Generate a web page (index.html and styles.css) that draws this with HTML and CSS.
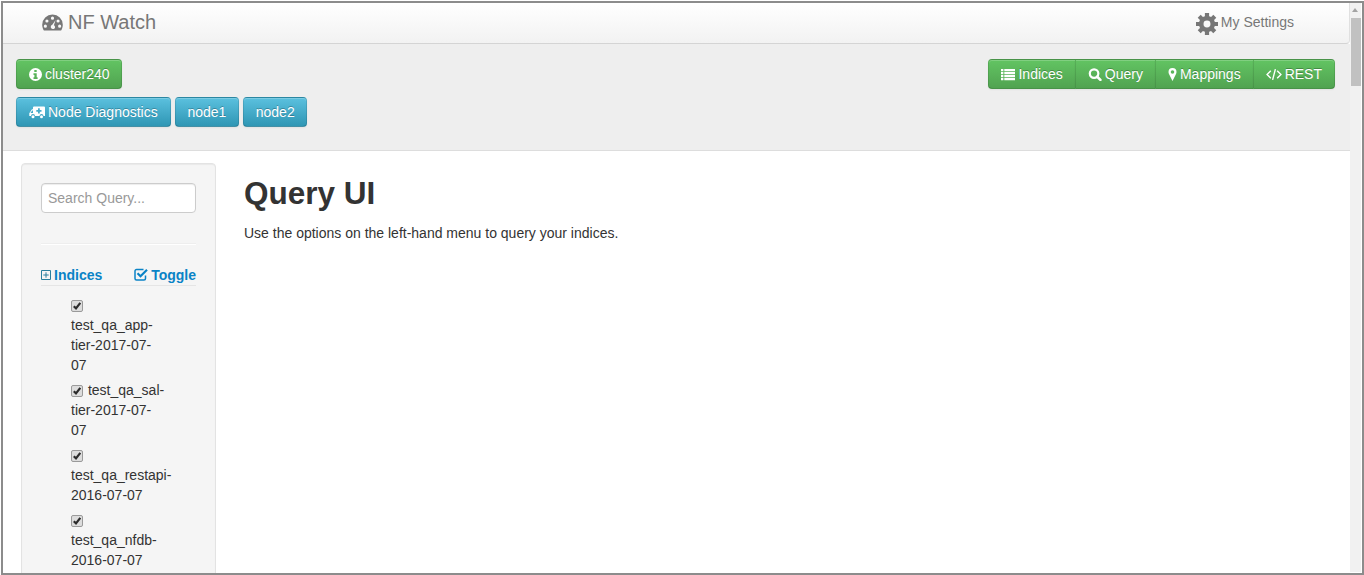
FILE: index.html
```html
<!DOCTYPE html>
<html lang="en">
<head>
<meta charset="utf-8">
<title>NF Watch</title>
<link rel="stylesheet" href="styles.css">
</head>
<body>
<div class="frame">
  <div class="page">
    <header class="navbar">
      <a class="brand">
        <svg class="brand-icon" viewBox="0 0 20 16"><path fill-rule="evenodd" d="M10 .5A9.7 9.7 0 0 0 .2 10.2c0 1.900.5 3.600 1.400 5.100.2.300.5.400.8.400h15.200c.3 0 .6-.1.800-.4.900-1.500 1.400-3.200 1.400-5.100A9.700 9.700 0 0 0 10 .5zM4.700 5.100a1.500 1.500 0 1 1 0 3 1.500 1.500 0 0 1 0-3zM10 2.400a1.500 1.500 0 1 1 0 3 1.500 1.500 0 0 1 0-3zM15.300 5.100a1.500 1.500 0 1 1 0 3 1.500 1.500 0 0 1 0-3zM3.200 10a1.500 1.500 0 1 1 0 3 1.500 1.500 0 0 1 0-3zM16.800 10a1.500 1.500 0 1 1 0 3 1.500 1.500 0 0 1 0-3zM13 5.700 11.300 10.500a2 2 0 1 1-2.600 2.800 2 2 0 0 1 1.100-3.100z"/></svg>
        <span>NF Watch</span>
      </a>
      <a class="settings">
        <svg class="gear" viewBox="0 0 24 24"><g stroke="currentColor" fill="none"><circle cx="12" cy="12" r="6.300" stroke-width="5"/><path stroke-width="4.600" d="M12 0v24M0 12h24M3.500 3.500l17 17M20.500 3.500l-17 17" stroke-dasharray="5 14 5"/></g></svg>
        <span>My Settings</span>
      </a>
    </header>
    <section class="toolbar">
      <div class="toolbar-left">
        <div class="btn-row">
          <a class="btn btn-green btn-cluster">
            <svg class="ico ico-info" viewBox="0.500 0.500 13 13"><path fill-rule="evenodd" d="M7 .5a6.500 6.500 0 1 0 0 13A6.500 6.500 0 0 0 7 .5zM5.800 2.500h2.400v2H5.800zM5 5.800h3.200v3.900h.9v1.700H5V9.700h.9V7.500H5z"/></svg>
            cluster240
          </a>
        </div>
        <div class="btn-row">
          <a class="btn btn-blue">
            <svg class="ico ico-amb" viewBox="0 0 16 13"><path fill-rule="evenodd" d="M5 .5h10a1 1 0 0 1 1 1V10h-1.500a2 2 0 0 0-4 0h-4.500a2 2 0 0 0-4 0H.3V7.200L3 3.200h1V1.500a1 1 0 0 1 1-1zM9 2.200v1.700H7.300v1.800H9v1.700h1.800V5.700h1.700V3.900h-1.700V2.200zM3.200 4.500 1.500 7h2.500V4.500z"/><circle cx="4" cy="10.800" r="1.500"/><circle cx="12.500" cy="10.800" r="1.500"/></svg>
            Node Diagnostics
          </a>
          <a class="btn btn-blue btn-node">node1</a>
          <a class="btn btn-blue btn-node">node2</a>
        </div>
      </div>
      <div class="btn-group">
        <a class="btn btn-green">
          <svg class="ico ico-list" viewBox="0 0 14 12"><path d="M0 .5h2.400v2.300H0zM3.300.5H14v2.300H3.300zM0 3.500h2.400v2.300H0zM3.300 3.500H14v2.300H3.300zM0 6.500h2.400v2.300H0zM3.300 6.500H14v2.300H3.300zM0 9.500h2.400v2.300H0zM3.300 9.500H14v2.300H3.300z"/></svg>
          Indices
        </a>
        <a class="btn btn-green">
          <svg class="ico ico-search" viewBox="0 0 14 14"><circle cx="6" cy="6" r="4.600" fill="none" stroke="currentColor" stroke-width="2.400"/><path d="M9.400 9.400l3.400 3.400" stroke="currentColor" stroke-width="2.800" stroke-linecap="round"/></svg>
          Query
        </a>
        <a class="btn btn-green">
          <svg class="ico ico-pin" viewBox="0 0 8 13"><path fill-rule="evenodd" d="M4 0a4 4 0 0 0-4 4c0 1 .3 1.600.6 2.200L4 13l3.400-6.800C7.700 5.600 8 5 8 4a4 4 0 0 0-4-4zm0 2.200a1.800 1.800 0 1 1 0 3.600 1.800 1.800 0 0 1 0-3.600z"/></svg>
          Mappings
        </a>
        <a class="btn btn-green">
          <svg class="ico ico-code" viewBox="0 0 15 12"><path d="M4.500 2.500 1 6l3.500 3.500M10.500 2.500 14 6l-3.500 3.500M8.800 1 6.200 11" fill="none" stroke="currentColor" stroke-width="1.300"/></svg>
          REST
        </a>
      </div>
    </section>
    <div class="content">
      <aside class="sidebar">
        <input class="search" type="text" placeholder="Search Query...">
        <hr class="rule">
        <div class="section-head">
          <a class="head-link">
            <svg class="head-ico" viewBox="0 0 10 10"><path d="M.5.5h9v9h-9zM5 2.300v5.400M2.300 5h5.400" fill="none" stroke="#2a7f9e" stroke-width="1"/></svg>
            Indices
          </a>
          <a class="head-link">
            <svg class="head-ico-lg" viewBox="0 0 14 13"><path d="M11.500 7.500v3a1.500 1.500 0 0 1-1.500 1.500H2.500A1.500 1.500 0 0 1 1 10.500V3a1.500 1.500 0 0 1 1.500-1.500h7" fill="none" stroke="currentColor" stroke-width="1.500"/><path d="M3.500 5.300 6.500 8.200 13 1.800" fill="none" stroke="currentColor" stroke-width="2.200"/></svg>
            Toggle
          </a>
        </div>
        <ul class="index-list">
          <li class="index-item"><span class="check"><svg viewBox="0 0 10 10"><path d="M1.800 5.200 4 7.400 8.300 1.800" fill="none" stroke="#2b2b2b" stroke-width="2.200"/></svg></span> test_qa_app-tier-2017-07-07</li>
          <li class="index-item"><span class="check"><svg viewBox="0 0 10 10"><path d="M1.800 5.200 4 7.400 8.300 1.800" fill="none" stroke="#2b2b2b" stroke-width="2.200"/></svg></span> test_qa_sal-tier-2017-07-07</li>
          <li class="index-item"><span class="check"><svg viewBox="0 0 10 10"><path d="M1.800 5.200 4 7.400 8.300 1.800" fill="none" stroke="#2b2b2b" stroke-width="2.200"/></svg></span> test_qa_restapi-2016-07-07</li>
          <li class="index-item"><span class="check"><svg viewBox="0 0 10 10"><path d="M1.800 5.200 4 7.400 8.300 1.800" fill="none" stroke="#2b2b2b" stroke-width="2.200"/></svg></span> test_qa_nfdb-2016-07-07</li>
        </ul>
      </aside>
      <main class="main">
        <h1 class="title">Query UI</h1>
        <p class="lead">Use the options on the left-hand menu to query your indices.</p>
      </main>
    </div>
  </div>
  <div class="scrollbar">
    <div class="scroll-arrow"></div>
    <div class="scroll-thumb"></div>
  </div>
</div>
</body>
</html>
```
FILE: styles.css
```css
* { box-sizing: border-box; }
html, body { margin: 0; height: 100%; overflow: hidden; background: #fff; }
body { font-family: "Liberation Sans", Arial, sans-serif; font-size: 14px; line-height: 20px; color: #333; }

.frame {
  display: flex;
  width: 1363px;
  height: 574px;
  margin: 1px 0 0 1px;
  border: 2px solid #8c8c8c;
  overflow: hidden;
}
.page { width: 1347px; flex: none; overflow: hidden; }

.navbar {
  display: flex;
  justify-content: space-between;
  height: 41px;
  padding: 0 55px 0 39px;
  background: linear-gradient(to bottom, #fff, #f2f2f2);
  border-bottom: 1px solid #d4d4d4;
  border-right: 1px solid #e0e0e0;
  border-bottom-right-radius: 4px;
  color: #777;
}
.brand { display: flex; align-items: center; gap: 5px; height: 38px; font-size: 20px; }
.brand-icon { width: 21px; height: 17px; fill: currentColor; margin-top: 1px; }
.settings { display: flex; align-items: center; gap: 3px; height: 38px; }
.gear { width: 22px; height: 22px; margin-top: 4px; }

.toolbar {
  display: flex;
  justify-content: space-between;
  height: 107px;
  padding: 15px 15px 0 13px;
  background: #eee;
  border-bottom: 1px solid #ddd;
}
.toolbar-left { display: flex; flex-direction: column; gap: 8px; }
.btn-row { display: flex; gap: 4px; }
.btn {
  display: flex;
  align-items: center;
  gap: 3px;
  height: 30px;
  padding: 0 12px;
  border: 1px solid;
  border-color: rgba(0,0,0,.1) rgba(0,0,0,.1) rgba(0,0,0,.25);
  border-radius: 4px;
  color: #fff;
  white-space: nowrap;
  text-shadow: 0 -1px 0 rgba(0,0,0,.25);
  box-shadow: inset 0 1px 0 rgba(255,255,255,.2), 0 1px 2px rgba(0,0,0,.05);
}
.btn-green { background: linear-gradient(to bottom, #62c462, #51a351); }
.btn-blue { background: linear-gradient(to bottom, #5bc0de, #2f96b4); }
.btn-cluster { padding-right: 11px; }
.btn-node { padding: 0 11.700px; }
.btn-group { display: flex; align-self: flex-start; }
.btn-group .btn { border-radius: 0; margin-left: -1px; }
.btn-group .btn:first-child { border-radius: 4px 0 0 4px; margin-left: 0; }
.btn-group .btn:last-child { border-radius: 0 4px 4px 0; }
.ico { height: 13px; fill: currentColor; flex: none; }
.ico-info { width: 13px; }
.ico-amb { width: 16px; }
.ico-list { width: 14px; }
.ico-search { width: 14px; }
.ico-pin { width: 9px; }
.ico-code { width: 16px; }

.content { display: flex; align-items: flex-start; }
.sidebar {
  flex: none;
  width: 195px;
  height: 500px;
  margin: 12px 0 0 18px;
  padding: 19px;
  background: #f5f5f5;
  border: 1px solid #e3e3e3;
  border-radius: 4px;
  box-shadow: inset 0 1px 1px rgba(0,0,0,.05);
}
.search {
  display: block;
  width: 155px;
  height: 30px;
  padding: 5px 6px;
  font: 14px/20px "Liberation Sans", Arial, sans-serif;
  color: #555;
  background: #fff;
  border: 1px solid #ccc;
  border-radius: 4px;
  box-shadow: inset 0 1px 1px rgba(0,0,0,.075);
}
.search::placeholder { color: #999; opacity: 1; }
.rule { margin: 30px 0 19px; border: 0; border-top: 1px solid #eee; border-bottom: 1px solid #fff; }
.section-head {
  display: flex;
  justify-content: space-between;
  width: 155px;
  height: 22px;
  border-bottom: 1px solid #e5e5e5;
  margin-bottom: 9px;
}
.head-link { display: flex; align-items: center; gap: 3px; height: 21px; font-weight: bold; color: #0a83c6; }
.head-ico { width: 10px; height: 10px; margin-top: 1px; }
.head-ico-lg { width: 14px; height: 13px; }
.index-list { list-style: none; margin: 0; padding: 0 30px; }
.index-item { margin-bottom: 5px; }
.check {
  display: inline-block;
  width: 12px;
  height: 12px;
  vertical-align: -2px;
  margin-right: 1px;
  background: #dcdcdc;
  border: 1px solid #9a9a9a;
  border-radius: 2px;
  overflow: hidden;
}
.check svg { display: block; width: 10px; height: 10px; }

.main { flex: 1; padding: 0 0 0 28px; }
.title { margin: 20px 0 8px; font-size: 31.500px; line-height: 44px; font-weight: bold; }
.lead { margin: 0; }

.scrollbar { position: relative; flex: none; width: 11px; height: 569px; background: #f1f1f1; }
.scroll-arrow {
  position: absolute;
  top: 5px;
  left: 2px;
  width: 0;
  height: 0;
  border: 3.500px solid transparent;
  border-top: 0;
  border-bottom: 4px solid #a3a3a3;
}
.scroll-thumb { position: absolute; top: 15px; left: 1px; width: 10px; height: 68px; background: #c1c1c1; }
```
